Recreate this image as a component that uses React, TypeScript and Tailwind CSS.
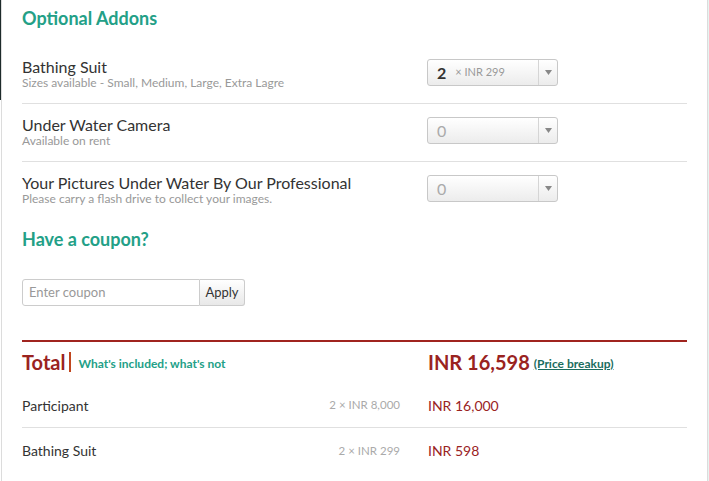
import React from "react";

// Optional addons + total summary panel

interface Addon {
  name: string;
  note: string;
  qty: number;
  price?: string;
}

const addons: Addon[] = [
  { name: "Bathing Suit", note: "Sizes available - Small, Medium, Large, Extra Lagre", qty: 2, price: "INR 299" },
  { name: "Under Water Camera", note: "Available on rent", qty: 0 },
  { name: "Your Pictures Under Water By Our Professional", note: "Please carry a flash drive to collect your images.", qty: 0 },
];

const lines = [
  { label: "Participant", calc: "2 × INR 8,000", amount: "INR 16,000" },
  { label: "Bathing Suit", calc: "2 × INR 299", amount: "INR 598" },
];

const QtySelect = ({ qty, price }: { qty: number; price?: string }) => (
  <div className="mt-[2px] flex h-[27px] w-[131px] items-stretch rounded-[3px] border border-[#c8c8c8] bg-gradient-to-b from-white to-[#ececec]">
    <div className="flex flex-1 items-center gap-[9px] pl-[9px]">
      <span className={qty > 0 ? "text-[16px] font-bold text-[#333]" : "text-[16px] text-[#aaa]"}>{qty}</span>
      {price && <span className="text-[11px] text-[#999]">× {price}</span>}
    </div>
    <div className="flex w-[19px] items-center justify-center border-l border-[#d5d5d5]">
      <svg width="7" height="5" viewBox="0 0 7 5">
        <path d="M0 0h7L3.5 5z" fill="#888" />
      </svg>
    </div>
  </div>
);

const App = () => {
  return (
    <div className="flex h-[481px] w-full overflow-hidden bg-white font-['Lato','Liberation_Sans',sans-serif]">
      {/* left edge */}
      <div className="flex w-[1px] flex-col">
        <div className="h-[100px] bg-[#1e2b2b]" />
      </div>
      <div className="flex-1 border-l border-r border-[#dcdcdc] pl-[20px] pr-[20px]">
        <h2 className="pt-[5px] text-[18px] font-bold leading-[26px] text-[#23a087]">Optional Addons</h2>

        <div className="mt-[26px]">
          {addons.map((a, i) => (
            <div
              key={a.name}
              className={`flex items-start ${i === 0 ? "" : "pt-[11px]"} ${
                i < addons.length - 1 ? "border-b border-[#e0e0e0] pb-[14px]" : ""
              }`}
            >
              <div className="w-[405px]">
                <div className="text-[16px] leading-[19px] text-[#333]">{a.name}</div>
                <div className="text-[12px] leading-[13px] text-[#999]">{a.note}</div>
              </div>
              <QtySelect qty={a.qty} price={a.price} />
            </div>
          ))}
        </div>

        <h3 className="mt-[22px] text-[18px] font-bold leading-[24px] text-[#23a087]">Have a coupon?</h3>

        <div className="mt-[28px] flex h-[27px] w-[223px]">
          <input
            placeholder="Enter coupon"
            className="w-[178px] rounded-l-[3px] border border-[#ccc] px-[6px] text-[13px] text-[#333] placeholder:text-[#999] focus:outline-none"
          />
          <button className="flex-1 rounded-r-[3px] border border-l-0 border-[#ccc] bg-gradient-to-b from-white to-[#e8e8e8] text-[13px] text-[#333]">
            Apply
          </button>
        </div>

        <div className="mt-[34px] border-t-2 border-[#a0241f]">
          <div className="flex items-end pt-[7px] pb-[8px]">
            <div className="flex w-[406px] items-end gap-[4px]">
              <span className="text-[20px] font-bold leading-[26px] text-[#9a231f]">Total</span>
              <span className="mb-[3px] h-[20px] w-[2px] bg-[#c0461e]" />
              <span className="mb-[3px] ml-[3px] text-[12px] font-bold leading-[16px] text-[#23a087]">
                What's included; what's not
              </span>
            </div>
            <span className="text-[20px] font-bold leading-[26px] text-[#9a231f]">INR 16,598</span>
            <a className="mb-[3px] ml-[4px] text-[12px] font-bold leading-[16px] text-[#1b6d5e] underline">
              (Price breakup)
            </a>
          </div>

          {lines.map((l, i) => (
            <div
              key={l.label}
              className={`flex h-[45px] items-center ${i < lines.length - 1 ? "border-b border-[#e0e0e0]" : ""}`}
            >
              <span className="flex-1 text-[14px] text-[#333]">{l.label}</span>
              <span className="w-[120px] text-right text-[11.5px] text-[#aaa]">{l.calc}</span>
              <span className="ml-[28px] w-[259px] text-[14px] text-[#9a231f]">{l.amount}</span>
            </div>
          ))}
        </div>
      </div>
      <div className="w-[1px] bg-[#e6f4f1]" />
    </div>
  );
};

export default App;
